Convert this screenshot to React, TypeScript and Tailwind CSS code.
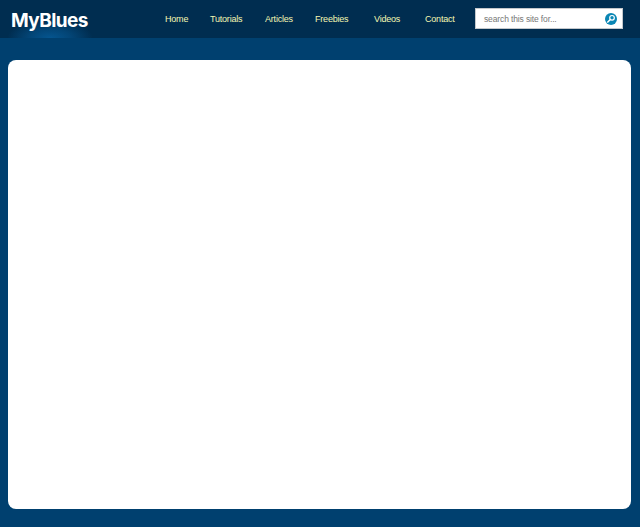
const navItems = [
  { label: 'Home', className: 'w-[23px] mr-[22px]' },
  { label: 'Tutorials', className: 'w-[33px] mr-[22px]' },
  { label: 'Articles', className: 'w-[28px] mr-[22px]' },
  { label: 'Freebies', className: 'w-[34px] mr-[25px]' },
  { label: 'Videos', className: 'w-[26px] mr-[25px]' },
  { label: 'Contact', className: 'w-[30px]' },
]

function SearchIcon() {
  return (
    <svg className="w-[12px] h-[12px]" viewBox="0 0 13 13">
      <circle cx="6.5" cy="6.5" r="6.5" fill="#0a86b4" />
      <circle cx="7.6" cy="5.2" r="2.5" fill="none" stroke="#ffffff" strokeWidth="1.3" />
      <path d="M5.8 7 L3 9.8" stroke="#ffffff" strokeWidth="1.7" strokeLinecap="round" />
    </svg>
  )
}

export default function App() {
  return (
    <div className="w-[640px] h-[527px] bg-[#00406f] overflow-hidden font-['Liberation_Sans',Arial,sans-serif]">
      <header className="relative h-[38px] bg-[#002d50] flex items-center">
        {/* glow under the logo */}
        <div className="absolute left-[8px] top-[20px] w-[84px] h-[18px] bg-[radial-gradient(ellipse_at_50%_100%,#05558f_0%,rgba(5,85,143,0.6)_35%,rgba(5,85,143,0)_72%)]" />
        <div className="relative ml-[11px] w-[154px] text-white text-[19px] leading-none font-bold tracking-[-0.6px] mt-[2px] font-['Inter',sans-serif]">
          MyBlues
        </div>

        <nav className="flex items-center text-[#f4f7b0] text-[9px] tracking-[-0.2px] mt-[2px]">
          {navItems.map((item) => (
            <a key={item.label} className={`${item.className} whitespace-nowrap`}>
              {item.label}
            </a>
          ))}
        </nav>

        <div className="ml-[20px] -mt-[1px] w-[148px] h-[21px] bg-white border border-[#c4c8cc] flex items-center justify-between pl-[8px] pr-[5px]">
          <span className="text-[8.5px] tracking-[-0.13px] text-[#777777] mt-[1px]">search this site for...</span>
          <SearchIcon />
        </div>
      </header>

      <main className="px-[8px] pt-[22px]">
        <div className="w-[623px] h-[449px] bg-white rounded-[8px]" />
      </main>
    </div>
  )
}
